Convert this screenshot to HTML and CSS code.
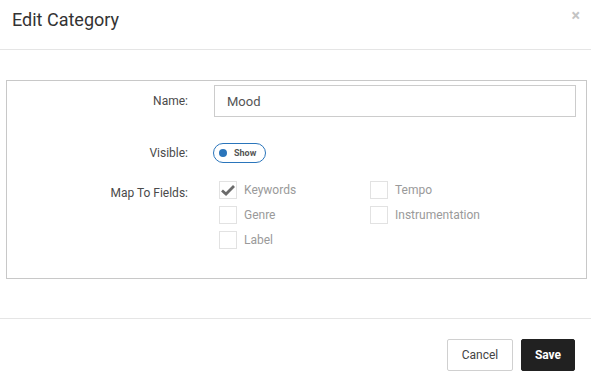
FILE: index.html
```html
<!DOCTYPE html>
<html lang="en">
  <head>
    <meta charset="UTF-8" />
    <meta name="viewport" content="width=device-width, initial-scale=1.0" />
    <title>Edit Category</title>

    <link rel="stylesheet" href="styles.css">
  </head>
  <body>
    <div class="modal">
      <div class="modal-header">
        <h1>Edit Category</h1>
        <span class="close">&times;</span>
      </div>

      <div class="modal-body">
        <div class="form-box">
          <div class="form-row row-name">
            <label class="form-label">Name:</label>
            <input type="text" class="text-input" value="Mood" />
          </div>

          <div class="form-row row-visible">
            <label class="form-label">Visible:</label>
            <span class="toggle"><span class="toggle-dot"></span>Show</span>
          </div>

          <div class="form-row row-fields">
            <label class="form-label">Map To Fields:</label>
            <div class="field-grid">
              <div class="check-item">
                <span class="check-box checked">
                  <svg width="14" height="12" viewBox="0 0 14 12">
                    <path d="M1 6.5 L5 10 L13 2" fill="none" stroke="#6b6b6b" stroke-width="2.8" />
                  </svg>
                </span>
                Keywords
              </div>
              <div class="check-item"><span class="check-box"></span>Tempo</div>
              <div class="check-item"><span class="check-box"></span>Genre</div>
              <div class="check-item"><span class="check-box"></span>Instrumentation</div>
              <div class="check-item"><span class="check-box"></span>Label</div>
            </div>
          </div>
        </div>
      </div>

      <div class="modal-footer">
        <button class="btn btn-cancel">Cancel</button>
        <button class="btn btn-save">Save</button>
      </div>
    </div>
  </body>
</html>
```

FILE: styles.css
```css
body {
  font-family: Roboto, "Liberation Sans", sans-serif;
  margin: 0;
  background: #fff;
  color: #444;
}
.modal {
  width: 591px;
}
.modal-header {
  position: relative;
  height: 50px;
  border-bottom: 1px solid #e5e5e5;
  box-sizing: border-box;
  padding: 8px 12px 0;
}
.modal-header h1 {
  margin: 0;
  font-size: 18px;
  font-weight: 400;
  color: #333;
  line-height: 24px;
}
.close {
  position: absolute;
  top: 6px;
  right: 11px;
  font-size: 16px;
  font-weight: bold;
  color: #c4c4c4;
}
.modal-body {
  padding: 30px 4px 39px 6px;
}
.form-box {
  border: 1px solid #c8c8c8;
  padding: 4px 10px 29px 0;
}
.form-row {
  display: flex;
  font-size: 12px;
}
.form-label {
  width: 181px;
  flex-shrink: 0;
  text-align: right;
  margin-right: 26px;
  color: #4a4a4a;
}
.row-name {
  align-items: center;
}
.text-input {
  flex: 1;
  height: 32px;
  box-sizing: border-box;
  border: 1px solid #ccc;
  padding: 0 12px;
  font-family: inherit;
  font-size: 13px;
  color: #555;
}
.row-visible {
  margin-top: 26px;
  align-items: center;
}
.toggle {
  display: inline-flex;
  align-items: center;
  height: 18px;
  margin-left: -1px;
  padding: 0 9px 0 5px;
  border: 1px solid #2a75bb;
  border-radius: 10px;
  font-size: 9px;
  font-weight: bold;
  color: #555;
}
.toggle-dot {
  width: 8px;
  height: 8px;
  border-radius: 50%;
  background: #2a75bb;
  margin-right: 7px;
}
.row-fields {
  margin-top: 18px;
}
.row-fields .form-label {
  padding-top: 5px;
}
.field-grid {
  display: grid;
  grid-template-columns: 151px 151px;
  row-gap: 7px;
  padding-left: 5px;
}
.check-item {
  display: flex;
  align-items: center;
  color: #9a9a9a;
  font-size: 12px;
  height: 18px;
}
.check-box {
  width: 18px;
  height: 18px;
  box-sizing: border-box;
  border: 1px solid #e2e2e2;
  margin-right: 7px;
  display: flex;
  align-items: center;
  justify-content: center;
}
.modal-footer {
  border-top: 1px solid #e5e5e5;
  padding: 20px 16px 0 0;
  display: flex;
  justify-content: flex-end;
  gap: 8px;
}
.btn {
  height: 32px;
  font-family: inherit;
  font-size: 12px;
  border-radius: 2px;
  cursor: pointer;
}
.btn-cancel {
  width: 66px;
  background: #fff;
  border: 1px solid #d0d0d0;
  color: #444;
}
.btn-save {
  width: 54px;
  background: #212121;
  border: 1px solid #212121;
  color: #fff;
  font-weight: bold;
}
```
